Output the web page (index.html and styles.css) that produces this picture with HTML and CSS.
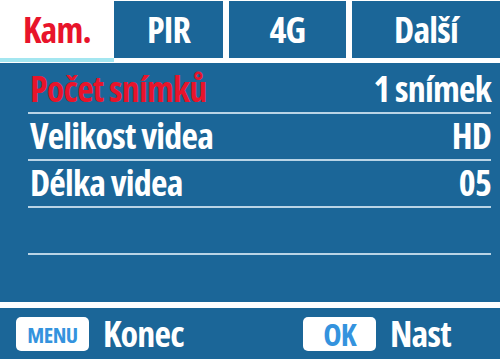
FILE: index.html
```html
<!DOCTYPE html>
<html lang="cs">
<head>
<meta charset="utf-8">
<title>Nastavení</title>
<link rel="stylesheet" href="styles.css">
</head>
<body>
<div class="screen">
  <nav class="tabs">
    <div class="tab tab-active tab-kam">Kam.</div>
    <div class="tab tab-pir">PIR</div>
    <div class="tab tab-4g">4G</div>
    <div class="tab tab-dalsi">Další</div>
  </nav>
  <section class="panel">
    <div class="row row-selected"><span class="label">Počet snímků</span><span class="value">1 snímek</span></div>
    <div class="row"><span class="label">Velikost videa</span><span class="value">HD</span></div>
    <div class="row"><span class="label">Délka videa</span><span class="value">05</span></div>
    <div class="row row-empty"></div>
  </section>
  <footer class="footer">
    <div class="hint"><span class="key key-menu">MENU</span><span class="hint-text">Konec</span></div>
    <div class="hint"><span class="key key-ok">OK</span><span class="hint-text">Nast</span></div>
  </footer>
</div>
</body>
</html>
```
FILE: styles.css
```css
html, body {
  margin: 0;
  padding: 0;
  background: #ffffff;
}
.screen {
  width: 500px;
  height: 359px;
  overflow: hidden;
  display: flex;
  flex-direction: column;
  font-family: "Open Sans", "Roboto Condensed", sans-serif;
  font-stretch: 75%;
  font-weight: 700;
  color: #ffffff;
}
.tabs {
  display: flex;
  height: 63px;
  padding-top: 1px;
  box-sizing: border-box;
  align-items: flex-start;
}
.tab {
  height: 57px;
  display: flex;
  align-items: center;
  justify-content: center;
  background: #1b6698;
  font-size: 36px;
  letter-spacing: -0.8px;
  box-sizing: border-box;
}
.tab-active {
  background: #ffffff;
  color: #e8142b;
  height: 62px;
  margin-top: -1px;
  padding-top: 1px;
  border-bottom: 4px solid #a3e6f0;
}
.tab-kam { width: 114px; }
.tab-pir { width: 109px; }
.tab-4g { width: 117px; margin-left: 6px; }
.tab-dalsi { width: 148px; margin-left: 6px; }
.panel {
  height: 239px;
  background: #1b6698;
  padding: 4px 9px 0 28px;
  box-sizing: border-box;
}
.row {
  height: 47px;
  box-sizing: border-box;
  border-bottom: 2px solid #b9d4e6;
  display: flex;
  align-items: center;
  justify-content: space-between;
  padding: 0 0 2px 2px;
  font-size: 36px;
  letter-spacing: -0.8px;
  white-space: nowrap;
}
.row-selected .label {
  color: #e8142b;
}
.footer {
  margin-top: 6px;
  height: 51px;
  background: #1b6698;
  display: grid;
  grid-template-columns: 287px 1fr;
  padding-left: 16px;
  align-items: center;
}
.hint {
  display: flex;
  align-items: center;
  gap: 14px;
}
.hint-text {
  font-size: 36px;
  letter-spacing: -0.8px;
}
.key {
  width: 73px;
  height: 34px;
  background: #ffffff;
  border-radius: 5px;
  color: #3493de;
  display: flex;
  align-items: center;
  justify-content: center;
}
.key-menu {
  font-size: 22px;
  letter-spacing: -0.5px;
}
.key-ok {
  font-size: 31px;
  letter-spacing: -0.8px;
}
```
